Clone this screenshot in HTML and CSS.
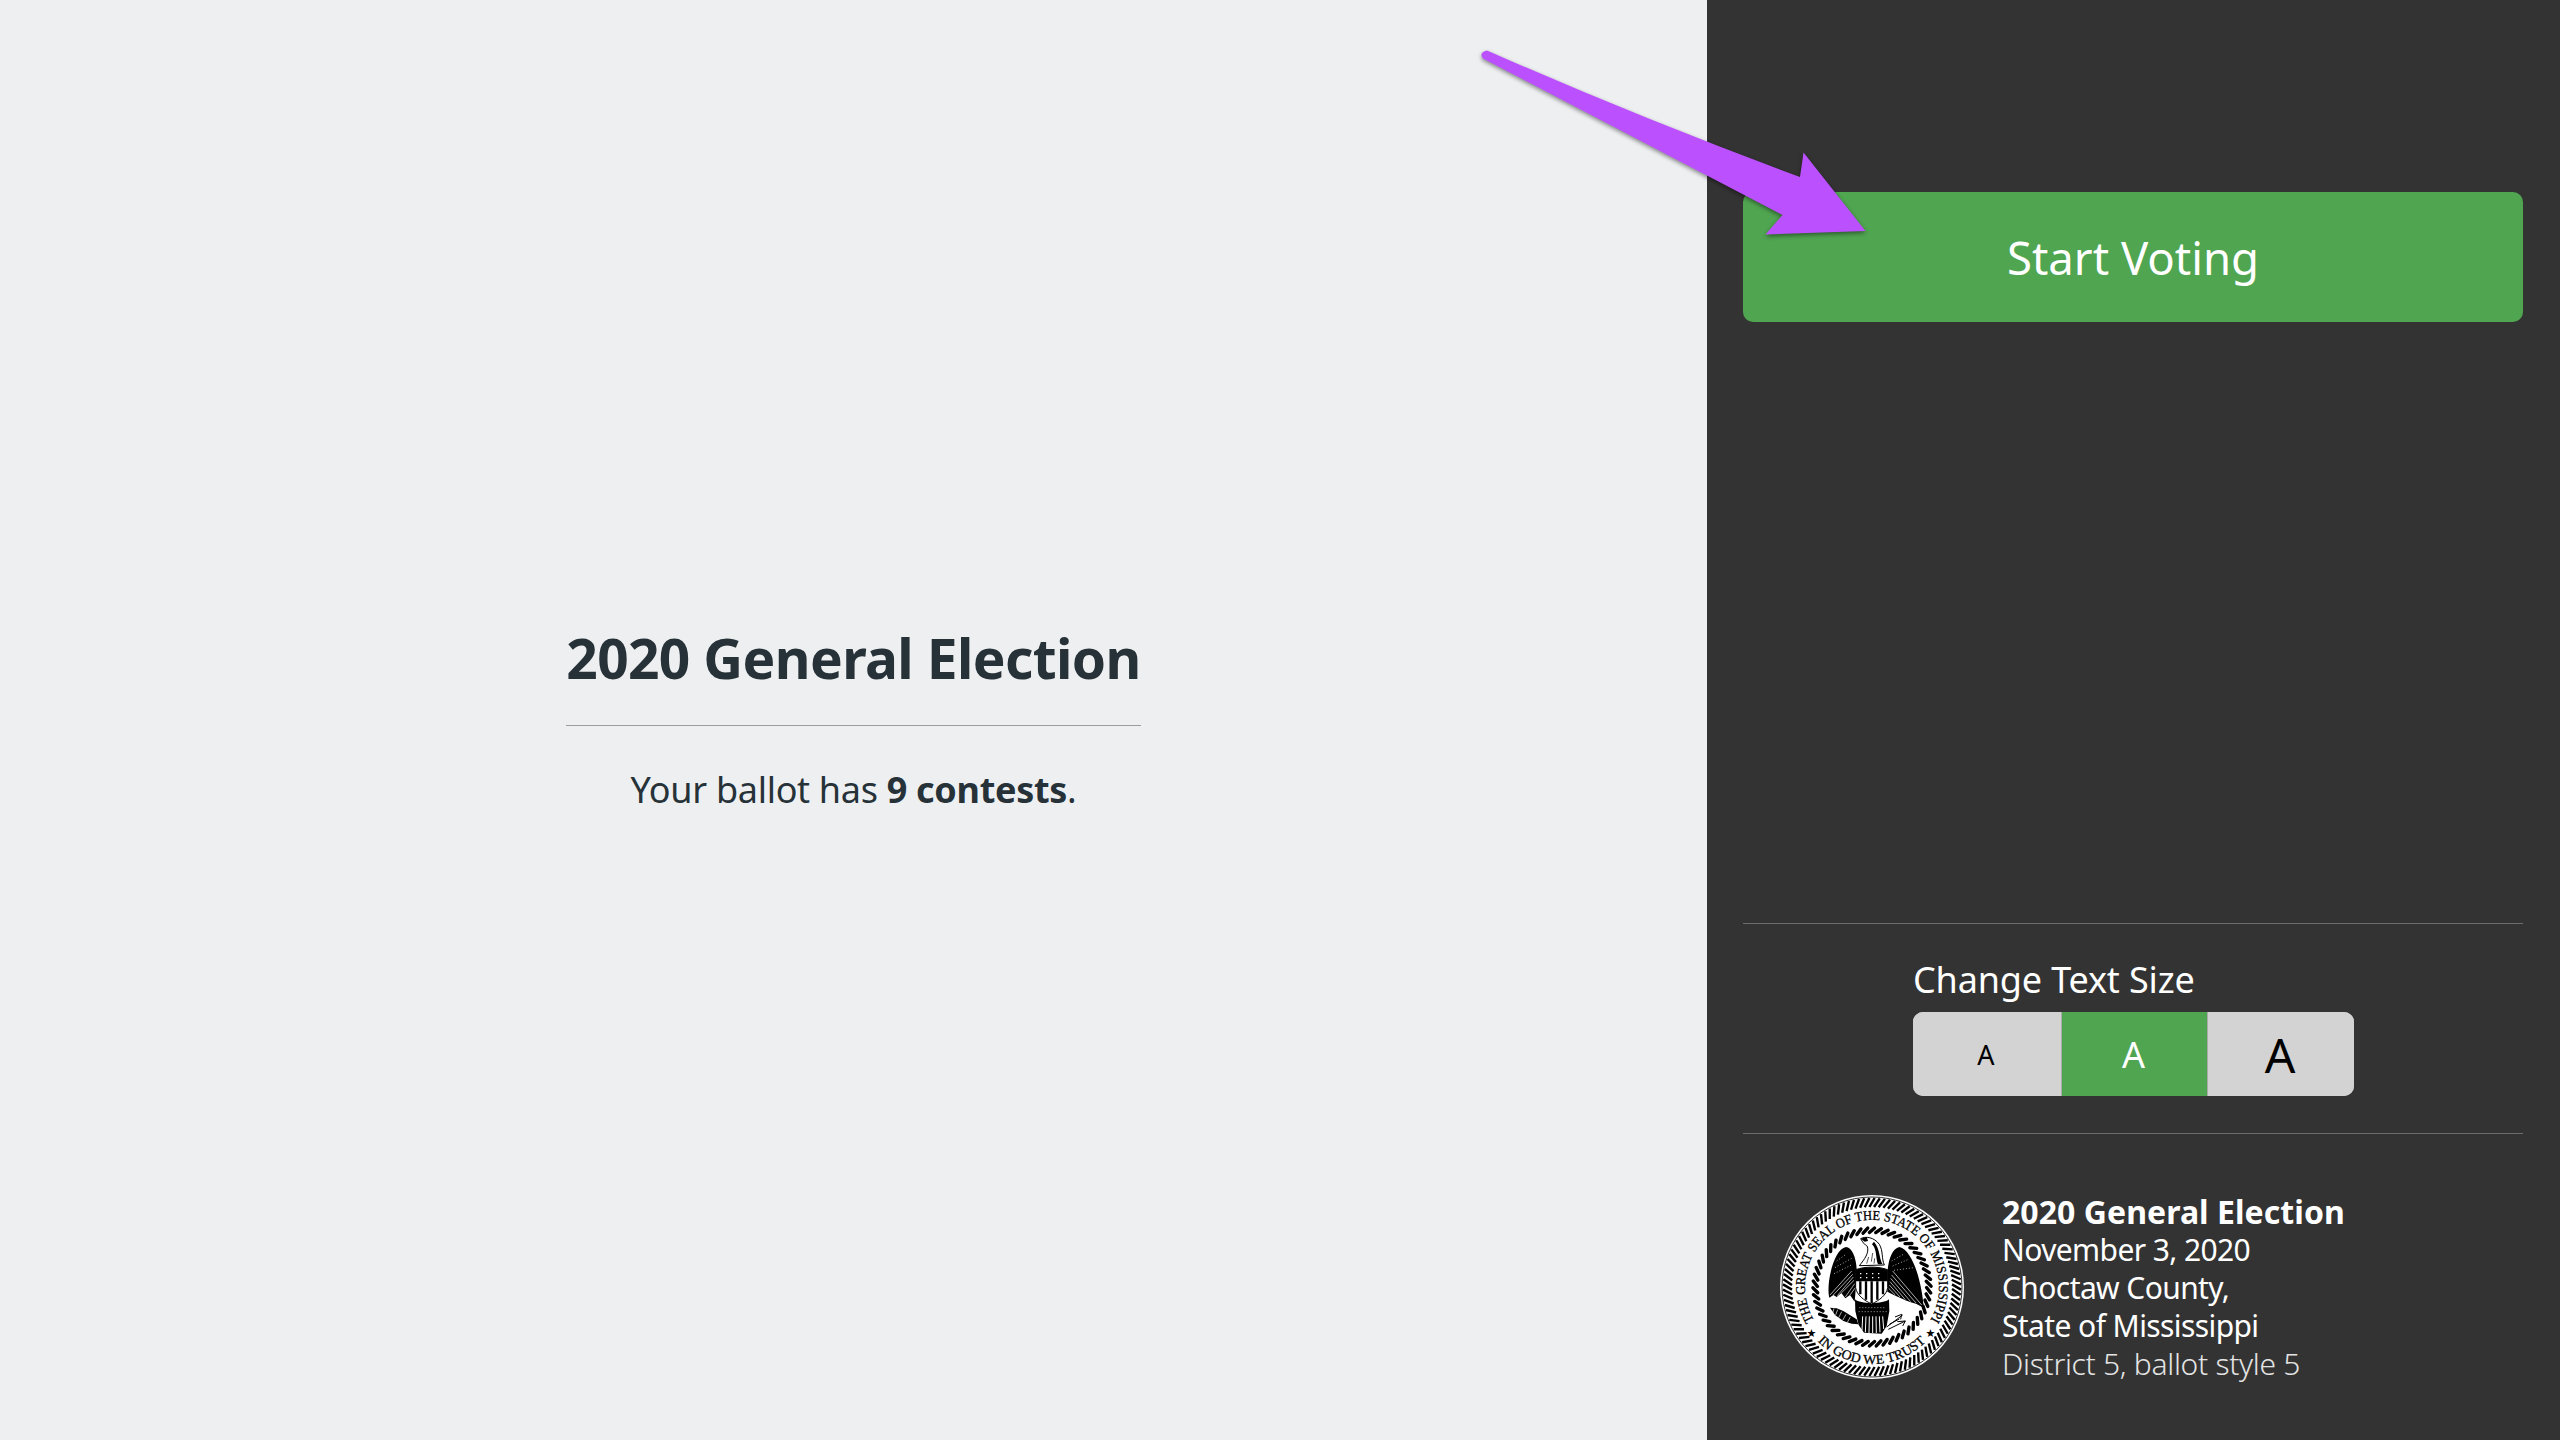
FILE: index.html
```html
<!DOCTYPE html>
<html lang="en">
<head>
<meta charset="utf-8">
<title>2020 General Election</title>
<link rel="stylesheet" href="styles.css">
</head>
<body>
<div class="app">
  <main class="intro">
    <div class="intro-inner">
      <h1 class="intro-title">2020 General Election</h1>
      <hr class="intro-rule">
      <p class="intro-text">Your ballot has <strong>9 contests</strong>.</p>
    </div>
  </main>
  <aside class="side">
    <button class="start">Start Voting</button>
    <div class="side-fill"></div>
    <hr class="side-rule">
    <section class="size-section">
      <div class="size-wrap">
        <div class="size-label">Change Text Size</div>
        <div class="size-group">
          <button class="size-btn size-s">A</button>
          <button class="size-btn size-m active">A</button>
          <button class="size-btn size-l">A</button>
        </div>
      </div>
    </section>
    <hr class="side-rule">
    <footer class="info">
      <svg class="seal" viewBox="0 0 184 184" aria-label="Seal of Mississippi">
        <defs>
          <g id="o1"><line x1="-2.6" y1="-80" x2="2.6" y2="-89" class="rope-o"/></g>
          <g id="o3"><use href="#o1"/><use href="#o1" transform="rotate(3.333)"/><use href="#o1" transform="rotate(6.667)"/></g>
          <g id="o9"><use href="#o3"/><use href="#o3" transform="rotate(10)"/><use href="#o3" transform="rotate(20)"/></g>
          <g id="o27"><use href="#o9"/><use href="#o9" transform="rotate(30)"/><use href="#o9" transform="rotate(60)"/></g>
          <g id="i1"><line x1="-2.6" y1="-54.5" x2="2.6" y2="-59" class="rope-i"/></g>
          <g id="i3"><use href="#i1"/><use href="#i1" transform="rotate(6.667)"/><use href="#i1" transform="rotate(13.333)"/></g>
          <g id="i9"><use href="#i3"/><use href="#i3" transform="rotate(20)"/><use href="#i3" transform="rotate(40)"/></g>
          <g id="i27"><use href="#i9"/><use href="#i9" transform="rotate(60)"/><use href="#i9" transform="rotate(120)"/></g>
          <path id="arc-top" d="M34 125.500 A67 67 0 1 1 150 125.500"/>
          <path id="arc-bot" d="M37.600 146.400 A77 77 0 0 0 146.400 146.400"/>
        </defs>
        <circle cx="92" cy="92" r="92" class="seal-disc"/>
        <circle cx="92" cy="92" r="90" class="seal-ring"/>
        <g transform="translate(92 92)">
          <use href="#o27"/><use href="#o27" transform="rotate(90)"/><use href="#o27" transform="rotate(180)"/><use href="#o27" transform="rotate(270)"/>
          <use href="#i27"/><use href="#i27" transform="rotate(180)"/>
        </g>
        <text class="seal-text"><textPath href="#arc-top" textLength="280" lengthAdjust="spacingAndGlyphs">THE GREAT SEAL OF THE STATE OF MISSISSIPPI</textPath></text>
        <text class="seal-text"><textPath href="#arc-bot" textLength="120" lengthAdjust="spacingAndGlyphs">IN GOD WE TRUST</textPath></text>
        <text class="seal-star" x="26.500" y="142">★</text>
        <text class="seal-star" x="145.500" y="142">★</text>
        <g transform="translate(92 92) scale(.3333) translate(-396 -348)">
          <path class="e-b" d="M318 228C334 228 349 258 350 295L348 345L344 392L330 372L316 382L304 366L290 378L280 372L268 380C258 345 278 236 318 228Z"/>
          <path class="e-b" d="M478 228C458 232 446 262 443 298L442 362L466 374L480 380L496 388L512 394L528 398L551 410C548 350 522 238 478 228Z"/>
          <path class="e-w" d="M335 300L270 372M338 310L280 372M340 318L292 374M342 328L304 366M344 338L316 378M346 350L330 372M458 300L545 402M455 312L528 396M452 322L512 392M450 332L496 386M448 342L480 378M446 352L466 372"/>
          <path class="e-spk" d="M290 270L318 250M285 290L335 262M282 308L338 280M455 270L490 250M458 285L505 265M462 298L520 290"/>
          <path class="e-head" d="M362 203C376 195 402 198 418 220C430 240 424 262 433 282L358 284C374 264 388 246 382 226C375 222 367 213 362 203Z"/>
          <path class="e-b" d="M362 203L380 198L384 210L374 212Z"/>
          <path class="e-b" d="M402 212C420 232 417 262 428 280L414 280C406 260 412 236 396 220Z"/>
          <path class="e-neck" d="M398 246L394 272M386 258L380 278M404 262L402 278"/>
          <path class="e-b" d="M345 385C360 400 430 400 447 385L448 420L440 465L425 488L372 485L356 462L346 420Z"/>
          <path class="e-shield" d="M347 296C375 286 415 286 443 296V350C440 372 418 388 395 399C372 388 350 372 347 350Z"/>
          <path class="e-b" d="M347 296C375 286 415 286 443 296V331H347Z"/>
          <path class="e-stripes" d="M361 331V370M378 331V386M395 331V397M412 331V386M429 331V370"/>
          <path class="e-dots" d="M360 308H432M360 320H432"/>
          <path class="e-w2" d="M368 436L366 478M378 436L376 484M388 436L387 486M398 436V486M408 436L409 486M418 436L420 484M428 436L431 474"/>
          <path class="e-spk" d="M358 410H436M356 422H440"/>
          <path class="e-b" d="M270 410L290 412L310 420L350 445L355 460L335 458L310 450L285 432Z"/>
          <path class="e-w" d="M282 412L278 426M293 416L287 432M305 422L296 440M318 430L308 448M331 438L322 454"/>
          <path class="e-arrow" d="M440 468L488 432M445 475L496 450M448 460L478 444M465 438L485 430L482 445M472 452L496 450L488 465"/>
        </g>
      </svg>
      <div class="info-text">
        <div class="info-title">2020 General Election</div>
        <div class="info-line">November 3, 2020</div>
        <div class="info-line">Choctaw County,</div>
        <div class="info-line">State of Mississippi</div>
        <div class="info-line info-dim">District 5, ballot style 5</div>
      </div>
    </footer>
  </aside>
</div>
<svg class="arrow" viewBox="0 0 2560 1440" aria-hidden="true">
  <path class="arrow-shape" d="M1487 50.500Q1640 118 1800 177L1803.500 152.500L1865.500 231L1765.500 234.500L1782.500 215Q1620 130 1483 58.500Q1478.500 52.500 1487 50.500Z"/>
</svg>
</body>
</html>
```

FILE: styles.css
```css
* { box-sizing: border-box; }
html, body { margin: 0; height: 100%; }
body { font-family: "Noto Sans", "Open Sans", sans-serif; color: #263238; background: #eeeff1; overflow: hidden; }
.app { display: flex; width: 2560px; height: 1440px; }

.intro { width: 1707px; display: flex; align-items: center; justify-content: center; padding-bottom: 5px; }
.intro-inner { width: 575px; display: flex; flex-direction: column; align-items: center; }
.intro-title { margin: 0; font-size: 55px; line-height: 72px; font-weight: 700; letter-spacing: -.62px; white-space: nowrap; color: #263238; }
.intro-rule { width: 100%; margin: 31px 0 40px; border: 0; border-top: 1px solid #9a9c9f; }
.intro-text { margin: 0; font-size: 36px; line-height: 48px; font-weight: 400; letter-spacing: -.3px; white-space: nowrap; }
.intro-text strong { font-weight: 700; }

.side { width: 853px; background: #333; color: #fff; padding: 192px 37px 0 36px; display: flex; flex-direction: column; }
.start { height: 130px; border: 0; border-radius: 10px; padding: 2px 0 0; background: #50a551; color: #fff; font: 400 45.5px/1 "Noto Sans", sans-serif; flex: none; }
.side-fill { height: 601px; flex: none; }
.side-rule { width: 100%; margin: 0; border: 0; border-top: 1px solid #6d6d6d; flex: none; }

.size-section { height: 209px; display: flex; justify-content: center; flex: none; padding-left: 1px; }
.size-wrap { width: 441px; padding-top: 24px; }
.size-label { font-size: 36px; line-height: 64px; letter-spacing: -.15px; white-space: nowrap; }
.size-group { display: flex; height: 84px; border-radius: 10px; overflow: hidden; background: #d3d3d3; }
.size-btn { border: 0; padding: 0 2px 0 0; background: #d3d3d3; color: #000; font-family: "Noto Sans", sans-serif; border-left: 1px solid #aaa; }
.size-btn:first-child { border-left: 0; }
.size-s { font-size: 27px; flex: 0 0 148px; }
.size-m { font-size: 36px; flex: 0 0 146px; }
.size-l { font-size: 48px; flex: 0 0 147px; }
.size-btn.active { background: #50a551; color: #fff; }

.info { display: flex; align-items: center; gap: 38px; padding: 56px 0 0 37px; }
.seal { width: 184px; height: 184px; flex: none; }
.seal-disc { fill: #fff; }
.seal-ring { fill: none; stroke: #000; stroke-width: .8; }
.rope-o { stroke: #000; stroke-width: 2.4; }
.rope-i { stroke: #000; stroke-width: 3.4; stroke-linecap: round; }
.seal-text { font-family: "Liberation Serif", serif; font-size: 13.500px; fill: #000; stroke: #000; stroke-width: .3; }
.seal-star { font-family: "DejaVu Sans", sans-serif; font-size: 11px; fill: #000; }
.e-b { fill: #000; }
.e-w { fill: none; stroke: #fff; stroke-width: 2; }
.e-w2 { fill: none; stroke: #fff; stroke-width: 3; }
.e-spk { fill: none; stroke: #fff; stroke-width: 2; stroke-dasharray: 3 6; }
.e-head { fill: #fff; stroke: #000; stroke-width: 3; }
.e-neck { fill: none; stroke: #000; stroke-width: 2; }
.e-shield { fill: #fff; stroke: #000; stroke-width: 3; }
.e-stripes { fill: none; stroke: #000; stroke-width: 7; }
.e-dots { fill: none; stroke: #fff; stroke-width: 4; stroke-dasharray: 4 14; }
.e-arrow { fill: none; stroke: #000; stroke-width: 3; }

.info-text { margin-top: 3px; font-size: 30px; line-height: 38px; letter-spacing: -.6px; white-space: nowrap; }
.info-title { font-size: 32px; font-weight: 700; letter-spacing: .05px; }
.info-dim { font-weight: 300; color: #e4e4e4; letter-spacing: -.3px; }

.arrow { position: absolute; left: 0; top: 0; width: 2560px; height: 1440px; pointer-events: none; }
.arrow-shape { fill: #bb50ff; filter: drop-shadow(0 2px 2px rgba(0,0,0,.45)); }
```
